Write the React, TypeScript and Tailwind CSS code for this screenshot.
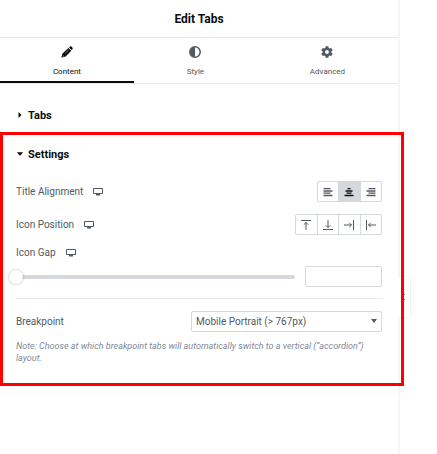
import { useState } from 'react';
import type { ReactNode } from 'react';
import clsx from 'clsx';

// ── Icons ─────────────────────────────────────────────────────────────────────

const PencilIcon = () => (
  <svg width="12" height="12" viewBox="0 0 12 12" fill="currentColor" aria-hidden="true">
    <path d="M8 1.5 8.9.7c.5-.5 1.1-.5 1.6 0l.9.9c.5.5.5 1.1 0 1.6l-.8.8z" />
    <path d="M7.4 1.9 10.3 4.8 4.6 10.5l-3.5 1.1c-.5.1-.8-.2-.7-.7l1.1-3.4zM2 9.3l-.4 1.3 1.3-.4z" fillRule="evenodd" />
    <path d="M4.2 7.4 7.6 4" stroke="#fff" strokeWidth=".5" />
  </svg>
);

const ContrastIcon = () => (
  <svg width="12" height="12" viewBox="0 0 12 12" aria-hidden="true">
    <circle cx="6" cy="6" r="5.2" fill="none" stroke="currentColor" strokeWidth="1.5" />
    <path d="M6 1a5 5 0 0 0 0 10z" fill="currentColor" />
  </svg>
);

const GearIcon = () => (
  <svg width="12" height="12" viewBox="2 2 20 20" fill="currentColor" aria-hidden="true">
    <path d="M19.14 12.94c.04-.3.06-.61.06-.94s-.02-.64-.07-.94l2.03-1.58a.49.49 0 0 0 .12-.61l-1.92-3.32a.49.49 0 0 0-.59-.22l-2.39.96a7 7 0 0 0-1.62-.94l-.36-2.54a.48.48 0 0 0-.48-.41h-3.84a.48.48 0 0 0-.47.41l-.36 2.54c-.59.24-1.13.57-1.62.94l-2.39-.96a.48.48 0 0 0-.59.22L2.74 8.87a.48.48 0 0 0 .12.61l2.03 1.58c-.05.3-.09.63-.09.94s.02.64.07.94l-2.03 1.58a.49.49 0 0 0-.12.61l1.92 3.32c.12.22.37.29.59.22l2.39-.96c.5.38 1.03.7 1.62.94l.36 2.54c.05.24.24.41.48.41h3.84c.24 0 .44-.17.47-.41l.36-2.54a7 7 0 0 0 1.62-.94l2.39.96c.22.08.47 0 .59-.22l1.92-3.32a.48.48 0 0 0-.12-.61zM12 15.2a3.2 3.2 0 1 1 0-6.4 3.2 3.2 0 0 1 0 6.4z" />
  </svg>
);

const DesktopIcon = () => (
  <svg width="10" height="9" viewBox="0 0 10 9" aria-hidden="true">
    <path d="M.5 1.5h9v5h-9z" fill="none" stroke="currentColor" strokeLinejoin="round" />
    <path d="M3 7h4v1.5H3z" fill="currentColor" />
  </svg>
);

const LineIcon = ({ d, weight = 1 }: { d: string; weight?: number }) => (
  <svg width="10" height="10" viewBox="0 0 10 10" fill="none" stroke="currentColor" strokeWidth={weight} className="shrink-0" aria-hidden="true">
    <path d={d} />
  </svg>
);

// ── Data ──────────────────────────────────────────────────────────────────────

const TABS = [
  { label: 'Content', icon: <PencilIcon /> },
  { label: 'Style', icon: <ContrastIcon /> },
  { label: 'Advanced', icon: <GearIcon /> },
];

const ALIGNMENTS = [
  { name: 'Start', weight: 1.3, d: 'M.5 1.7h7M.5 4h9M.5 6.2h7M.5 8.5h9' },
  { name: 'Center', weight: 1.3, d: 'M3.5 1.7h3M1.5 4h7M2.5 6.2h5M.5 8.5h9' },
  { name: 'End', weight: 1.3, d: 'M2.5 1.7h7M.5 4h9M2.5 6.2h7M.5 8.5h9' },
];

const POSITIONS = [
  { name: 'Top', d: 'M0 .5h10M5 10V2.5M2.8 4.7 5 2.5l2.2 2.2' },
  { name: 'Bottom', d: 'M0 9.5h10M5 0v7.5M2.8 5.3 5 7.5l2.2-2.2' },
  { name: 'After', d: 'M9.5 0v10M0 5h7.5M5.3 2.8 7.5 5 5.3 7.2' },
  { name: 'Before', d: 'M.5 0v10M10 5H2.5M4.7 2.8 2.5 5l2.2 2.2' },
];

// ── Controls ──────────────────────────────────────────────────────────────────

const ResponsiveLabel = ({ children }: { children: ReactNode }) => (
  <div className="flex items-center gap-[10px]">
    <span>{children}</span>
    <button type="button" aria-label="Desktop">
      <DesktopIcon />
    </button>
  </div>
);

type ChoicesProps = {
  label: string;
  options: { name: string; d: string; weight?: number }[];
  value: string | null;
  onChange: (name: string) => void;
  className: string;
};

const Choices = ({ label, options, value, onChange, className }: ChoicesProps) => (
  <div
    role="group"
    aria-label={label}
    className={clsx('flex h-[21px] overflow-hidden rounded-xs border border-[#d5d8dc] divide-x divide-[#d5d8dc]', className)}
  >
    {options.map((option) => (
      <button
        key={option.name}
        type="button"
        aria-label={option.name}
        aria-pressed={value === option.name}
        onClick={() => onChange(option.name)}
        className={clsx(
          'flex flex-1 items-center justify-center',
          value === option.name && 'bg-[#d5d8dc] text-[#0c0d0e]',
        )}
      >
        <LineIcon d={option.d} weight={option.weight} />
      </button>
    ))}
  </div>
);

const SectionToggle = ({ open, children }: { open?: boolean; children: ReactNode }) => (
  <button type="button" aria-expanded={!!open} className="flex h-8 w-full items-center gap-1 px-4 text-[11px] font-bold text-[#0c0d0e]">
    <svg width="8" height="8" viewBox="0 0 8 8" fill="currentColor" aria-hidden="true">
      <path d={open ? 'M.8 1.3h6.4L4 4.8z' : 'M2.5 0v6l3-3z'} />
    </svg>
    {children}
  </button>
);

// ── Panel ─────────────────────────────────────────────────────────────────────

export default function App() {
  const [tab, setTab] = useState('Content');
  const [alignment, setAlignment] = useState('Center');
  const [position, setPosition] = useState<string | null>(null);
  const [gap, setGap] = useState('');

  return (
    <div className="flex min-h-screen bg-white font-[Roboto,sans-serif] text-[10px] text-[#515962]">
      <main className="relative min-w-0 flex-1 bg-white shadow-[2px_0_1px_#f6f6f7]">
        <header className="flex h-[38px] items-center justify-center border-b border-[#e6e8ea]">
          <h1 className="text-xs font-bold text-[#0c0d0e]">Edit Tabs</h1>
        </header>

        <nav className="flex border-b border-[#e6e8ea]">
          {TABS.map(({ label, icon }) => (
            <button
              key={label}
              type="button"
              onClick={() => setTab(label)}
              className={clsx(
                'flex h-[45px] flex-auto flex-col items-center gap-2 border-b-2 pt-2 text-[8px] leading-3',
                tab === label ? 'border-[#0c0d0e] text-[#0c0d0e]' : 'border-transparent',
              )}
            >
              {icon}
              {label}
            </button>
          ))}
        </nav>

        <div className="pt-4">
          <SectionToggle>Tabs</SectionToggle>
        </div>

        <section className="relative pt-[7px] pb-[22px]">
          <SectionToggle open>Settings</SectionToggle>

          <div className="flex flex-col px-4 pt-[10px]">
            <div className="flex items-center justify-between">
              <ResponsiveLabel>Title Alignment</ResponsiveLabel>
              <Choices label="Title Alignment" options={ALIGNMENTS} value={alignment} onChange={setAlignment} className="w-[65px]" />
            </div>

            <div className="mt-3 flex items-center justify-between">
              <ResponsiveLabel>Icon Position</ResponsiveLabel>
              <Choices label="Icon Position" options={POSITIONS} value={position} onChange={setPosition} className="w-[87px]" />
            </div>

            <div className="mt-[10px]">
              <ResponsiveLabel>Icon Gap</ResponsiveLabel>
            </div>
            <div className="mt-[6px] flex items-center gap-[10px]">
              <input
                type="range"
                aria-label="Icon Gap"
                min="0"
                max="100"
                value={gap || '0'}
                onChange={(e) => setGap(e.target.value)}
                className="-ml-[7px] h-1 min-w-0 flex-1 appearance-none rounded-full bg-[#d5d8dc] [&::-webkit-slider-thumb]:size-[14px] [&::-webkit-slider-thumb]:appearance-none [&::-webkit-slider-thumb]:rounded-full [&::-webkit-slider-thumb]:bg-white [&::-webkit-slider-thumb]:shadow-[0_0_3px_rgba(0,0,0,0.3)]"
              />
              <input
                type="text"
                aria-label="Icon Gap value"
                value={gap}
                onChange={(e) => setGap(e.target.value)}
                className="h-[21px] w-[77px] rounded-xs border border-[#d5d8dc] px-1"
              />
            </div>

            <div className="mt-[11px] flex items-center justify-between border-t border-[#e6e8ea] pt-3">
              <label htmlFor="breakpoint">Breakpoint</label>
              <div className="relative w-[191px]">
                <select id="breakpoint" className="block h-[21px] w-full appearance-none rounded-xs border border-[#d5d8dc] bg-white px-1">
                  <option>Mobile Portrait (&gt; 767px)</option>
                </select>
                <svg width="6" height="4" viewBox="0 0 6 4" fill="currentColor" className="pointer-events-none absolute top-2 right-[5px]" aria-hidden="true">
                  <path d="M0 0h6L3 4z" />
                </svg>
              </div>
            </div>
            <p className="mt-2 text-[9px] leading-3 text-[#818a96] italic">
              Note: Choose at which breakpoint tabs will automatically switch to a vertical (“accordion”) layout.
            </p>
          </div>

          <div className="pointer-events-none absolute inset-y-0 left-0 -right-[6px] z-10 border-3 border-[#ff0000]" />
        </section>

        <button type="button" aria-label="Hide panel" className="absolute top-[277px] left-full flex h-10 w-3 items-center bg-white pl-[2px] shadow-[1px_0_2px_#ececee]">
          <svg width="5" height="8" viewBox="0 0 5 8" fill="none" stroke="currentColor" aria-hidden="true">
            <path d="M4.8 1.2 2 4l2.8 2.8" />
          </svg>
        </button>
      </main>
      <aside className="w-[39px] shrink-0" />
    </div>
  );
}
